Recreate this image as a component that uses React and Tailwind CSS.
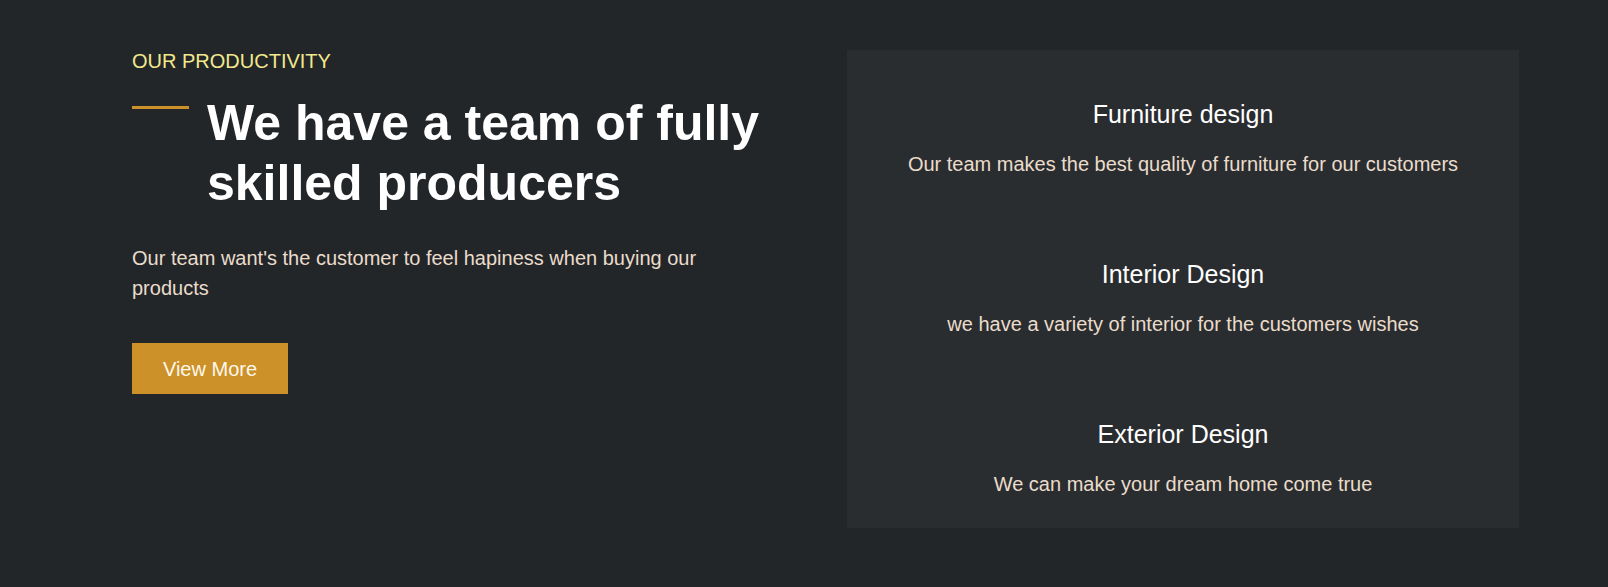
import React from 'react';

const services = [
    { title: 'Furniture design', text: 'Our team makes the best quality of furniture for our customers' },
    { title: 'Interior Design', text: 'we have a variety of interior for the customers wishes' },
    { title: 'Exterior Design', text: 'We can make your dream home come true' },
];

const App = () => {
    return (
        <div className="min-h-screen w-full bg-[#232629] font-['Liberation_Sans',Arial,sans-serif]">
            <div className="flex items-start justify-between pl-[132px] pr-[89px] pt-[48px] pb-[58px]">
                {/* left column */}
                <div className="w-[640px] pt-[2px]">
                    <p className="text-[20px] leading-[23px] text-[#f2e98c] uppercase">Our productivity</p>
                    <div className="flex items-start gap-[18px] mt-[20px]">
                        <span className="block w-[57px] h-[3px] mt-[13px] bg-[#cc9129] shrink-0"></span>
                        <h2 className="text-[50px] leading-[60px] font-bold text-white">
                            We have a team of fully skilled producers
                        </h2>
                    </div>
                    <p className="mt-[30px] text-[20px] leading-[30px] text-[#eadccb] pr-[40px]">
                        Our team want's the customer to feel hapiness when buying our products
                    </p>
                    <button className="mt-[40px] w-[156px] h-[51px] bg-[#cc9129] text-[20px] text-[#fff8ec] flex items-center justify-center">
                        View More
                    </button>
                </div>

                {/* right card */}
                <div className="w-[672px] mt-[2px] bg-[#2a2d30] pt-[50px] pb-[32px] flex flex-col gap-[84px]">
                    {services.map((s) => (
                        <div key={s.title} className="text-center">
                            <h3 className="text-[25px] leading-[29px] text-white">{s.title}</h3>
                            <p className="mt-[24px] text-[20px] leading-[23px] text-[#eadccb]">{s.text}</p>
                        </div>
                    ))}
                </div>
            </div>
        </div>
    );
};

export default App;
